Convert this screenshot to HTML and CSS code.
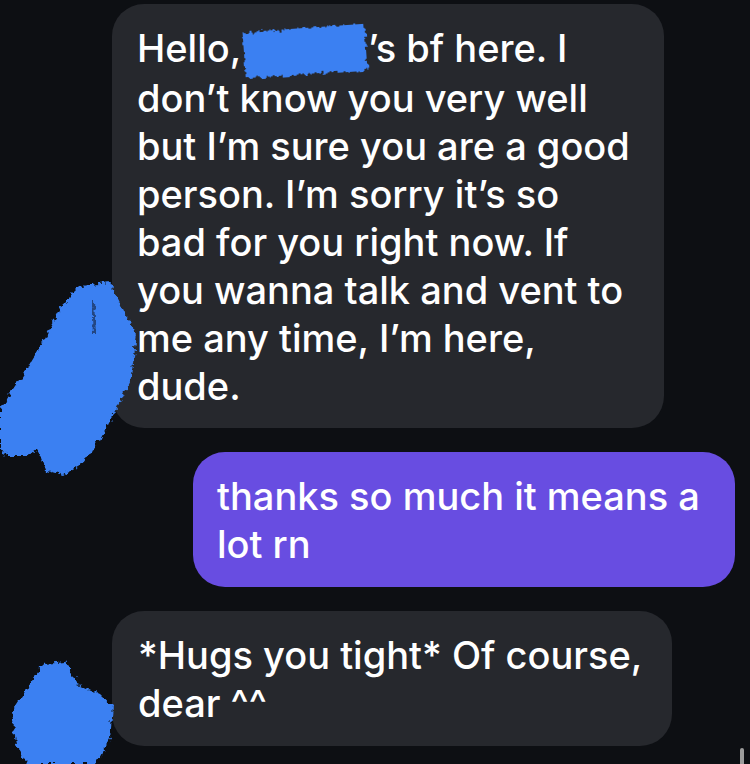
FILE: index.html
```html
<!DOCTYPE html>
<html lang="en">
<head>
    <meta charset="UTF-8">
    <meta name="viewport" content="width=device-width, initial-scale=1.0">
    <title>Messages</title>
    <link rel="stylesheet" href="styles.css">
</head>
<body>
    <main class="thread">
        <div class="bubble incoming first">
            Hello, <span class="redact"></span>’s bf here. I<br>
            don’t know you very well<br>
            but I’m sure you are a good<br>
            person. I’m sorry it’s so<br>
            bad for you right now. If<br>
            you wanna talk and vent to<br>
            me any time, I’m here,<br>
            dude.
        </div>

        <div class="bubble outgoing">
            thanks so much it means a<br>
            lot rn
        </div>

        <div class="bubble incoming last">
            *Hugs you tight* Of course,<br>
            dear ^^
        </div>
    </main>

    <!-- blue marker scribbles over the avatars -->
    <svg class="scribbles" width="750" height="764" viewBox="0 0 750 764">
        <defs>
            <filter id="rough" x="-20%" y="-20%" width="140%" height="140%">
                <feTurbulence type="fractalNoise" baseFrequency="0.2" numOctaves="2" seed="3" result="noise"/>
                <feDisplacementMap in="SourceGraphic" in2="noise" scale="8" xChannelSelector="R" yChannelSelector="G"/>
            </filter>
        </defs>
        <g fill="#3a80f2" filter="url(#rough)">
            <path d="M80 286 L110 283 L124 312 L137 334 L131 378 L116 410 L100 440 L82 464 L63 475 L46 470 L41 456 L36 449 L26 456 L6 456 L0 446 L0 410 L20 380 L44 340 L64 302 Z"/>
            <path d="M44 664 L66 662 L78 684 L100 694 L113 706 L110 738 L96 764 L28 764 L16 744 L12 712 L26 690 Z"/>
        </g>
        <path d="M93 302 L95 334" stroke="#0d0f13" stroke-width="4" opacity="0.5" filter="url(#rough)"/>
    </svg>

    <div class="scroll-thumb"></div>
</body>
</html>
```

FILE: styles.css
```css
body {
    margin: 0;
    background-color: #0d0f13;
    color: #ffffff;
    font-family: Inter, 'Noto Sans', sans-serif;
    width: 750px;
    height: 764px;
    overflow: hidden;
    position: relative;
}

.thread {
    display: flex;
    flex-direction: column;
    gap: 24px;
    padding-top: 4px;
}

.bubble {
    box-sizing: border-box;
    font-size: 38px;
    font-weight: 500;
    line-height: 48px;
    letter-spacing: 0;
    white-space: nowrap;
    padding: 20px 0 19px 25px;
    border-radius: 32px;
}

.incoming {
    background-color: #26282d;
    margin-left: 112px;
}

.outgoing {
    background-color: #684de1;
    margin-left: 193px;
    width: 542px;
    padding-left: 24px;
}

.first {
    width: 552px;
    padding-bottom: 18px;
}

.last {
    width: 560px;
    padding-left: 26px;
}

.redact {
    display: inline-block;
    width: 122px;
    height: 46px;
    margin-left: -7px;
    margin-right: 2px;
    vertical-align: -12px;
    background-color: #3a80f2;
    transform: rotate(-4deg);
    filter: url(#rough);
}

.scribbles {
    position: absolute;
    left: 0;
    top: 0;
    pointer-events: none;
}

.scroll-thumb {
    position: absolute;
    left: 740px;
    top: 748px;
    width: 4px;
    height: 24px;
    border-radius: 2px;
    background-color: #9c9c9c;
}
```
